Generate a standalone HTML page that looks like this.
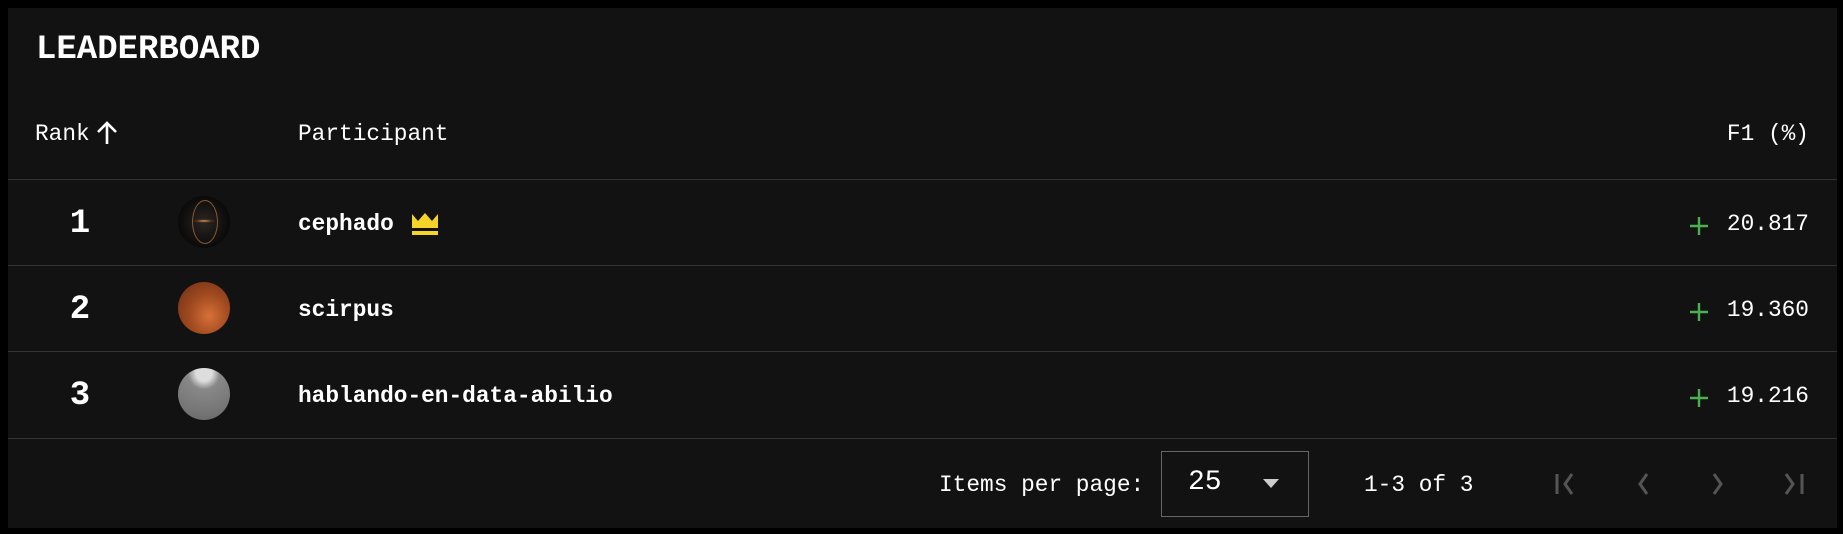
<!DOCTYPE html>
<html><head><meta charset="utf-8"><style>
*{margin:0;padding:0;box-sizing:border-box}
body{width:1843px;height:534px;background:#000;font-family:"Liberation Mono",monospace;color:#fff;position:relative;overflow:hidden}
.panel{position:absolute;left:8px;top:8px;width:1829px;height:520px;background:#121212}
.abs{position:absolute;white-space:nowrap}
.line{position:absolute;left:8px;width:1829px;height:1px;background:#333}
.title{left:36px;top:31px;font-size:34px;font-weight:bold}
.hdr{font-size:22.8px;top:121px}
.rank{font-size:34px;font-weight:bold;width:60px;text-align:center;left:50px}
.av{position:absolute;left:178px;width:52px;height:52px;border-radius:50%}
.name{left:298px;font-size:22.8px;font-weight:bold}
.val{font-size:22.8px;right:34px}
</style></head><body>
<div class="panel"></div>
<div class="abs title">LEADERBOARD</div>
<div class="abs hdr" style="left:35px">Rank</div>
<svg class="abs" style="left:96px;top:121px" width="22" height="24" viewBox="0 0 22 24"><path d="M11 23V3M2 11l9-9 9 9" stroke="#fff" stroke-width="2.6" fill="none"/></svg>
<div class="abs hdr" style="left:298px">Participant</div>
<div class="abs hdr" style="right:34px">F1 (%)</div>
<div class="line" style="top:179px"></div>
<div class="line" style="top:265px"></div>
<div class="line" style="top:351px"></div>
<div class="line" style="top:438px"></div>

<div class="abs rank" style="top:205px">1</div>
<div class="av" style="top:196px;background:radial-gradient(ellipse 18px 3px at 50% 48%,#e8a060,rgba(120,70,30,.5) 40%,transparent 70%),radial-gradient(circle at 50% 50%,#2a2622,#0a0a0a 70%)"><div style="position:absolute;left:14px;top:4px;width:26px;height:44px;border:1.5px solid #8a5a30;border-radius:50%"></div></div>
<div class="abs name" style="top:211px">cephado</div>
<svg class="abs" style="left:411px;top:212px" width="28" height="24" viewBox="0 0 28 24"><path d="M1 2l6 7 7-8 7 8 6-7v14H1z" fill="#f5d328"/><rect x="1" y="19" width="26" height="4" fill="#f5d328"/></svg>
<svg class="abs" style="left:1690px;top:217px" width="18" height="18"><path d="M9 0v18M0 9h18" stroke="#4caf50" stroke-width="2.4"/></svg>
<div class="abs val" style="top:211px">20.817</div>

<div class="abs rank" style="top:291px">2</div>
<div class="av" style="top:282px;background:radial-gradient(ellipse at 60% 65%,#d87038,#a04a20 45%,#6a2c12 100%)"></div>
<div class="abs name" style="top:297px">scirpus</div>
<svg class="abs" style="left:1690px;top:303px" width="18" height="18"><path d="M9 0v18M0 9h18" stroke="#4caf50" stroke-width="2.4"/></svg>
<div class="abs val" style="top:297px">19.360</div>

<div class="abs rank" style="top:377px">3</div>
<div class="av" style="top:368px;background:radial-gradient(circle at 50% 10%,#ddd 15%,#888 30%,#777 70%,#666)"></div>
<div class="abs name" style="top:383px">hablando-en-data-abilio</div>
<svg class="abs" style="left:1690px;top:389px" width="18" height="18"><path d="M9 0v18M0 9h18" stroke="#4caf50" stroke-width="2.4"/></svg>
<div class="abs val" style="top:383px">19.216</div>

<div class="abs" style="left:939px;top:472px;font-size:22.8px">Items per page:</div>
<div class="abs" style="left:1161px;top:451px;width:148px;height:66px;border:1px solid #666"></div>
<div class="abs" style="left:1188px;top:467px;font-size:28px">25</div>
<svg class="abs" style="left:1263px;top:479px" width="16" height="10"><path d="M0 0h16L8 9z" fill="#ccc"/></svg>
<div class="abs" style="left:1364px;top:472px;font-size:22.8px">1-3 of 3</div>
<svg class="abs" style="left:1554px;top:472px" width="260" height="24" viewBox="0 0 260 24" fill="none" stroke="#555" stroke-width="3">
<path d="M3 2v20M18 2l-7 10 7 10"/>
<path d="M93 2l-7 10 7 10"/>
<path d="M160 2l7 10-7 10"/>
<path d="M232 2l7 10-7 10M248 2v20"/>
</svg>
</body></html>
